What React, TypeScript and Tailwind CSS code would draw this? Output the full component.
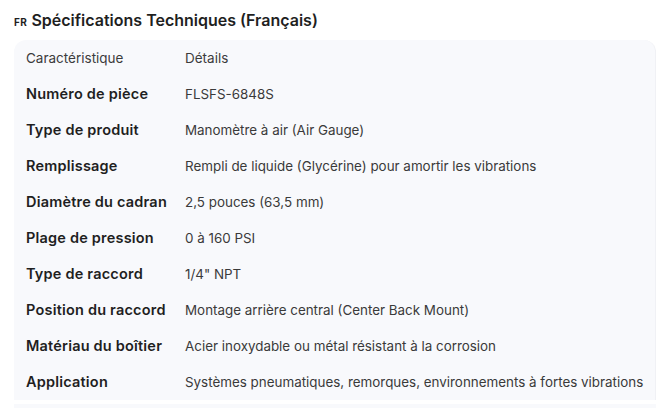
import React from "react";

const rows: [string, string][] = [
  ["Numéro de pièce", "FLSFS-6848S"],
  ["Type de produit", "Manomètre à air (Air Gauge)"],
  ["Remplissage", "Rempli de liquide (Glycérine) pour amortir les vibrations"],
  ["Diamètre du cadran", "2,5 pouces (63,5 mm)"],
  ["Plage de pression", "0 à 160 PSI"],
  ["Type de raccord", "1/4\" NPT"],
  ["Position du raccord", "Montage arrière central (Center Back Mount)"],
  ["Matériau du boîtier", "Acier inoxydable ou métal résistant à la corrosion"],
  ["Application", "Systèmes pneumatiques, remorques, environnements à fortes vibrations"],
];

export default function App() {
  return (
    <div className="w-[670px] h-[408px] overflow-hidden bg-white" style={{ fontFamily: "Inter, 'Noto Sans', sans-serif" }}>
      <div className="pl-[14px] pt-[8px] h-[40px] flex items-start">
        <div className="flex items-baseline gap-[4px]">
          <span className="text-[10px] font-bold text-[#1f1f1f] tracking-[0.5px]">FR</span>
          <span className="text-[16px] font-semibold text-[#1f1f1f]">Spécifications Techniques (Français)</span>
        </div>
      </div>
      <div className="ml-[14px] w-[642px] bg-[#f8f9fc] rounded-t-[12px] border-r border-[#f0f1f5]">
        <div className="grid grid-cols-[171px_1fr] h-[36px] items-center text-[13.5px] text-[#3c3c3c]">
          <div className="pl-[12px]">Caractéristique</div>
          <div>Détails</div>
        </div>
        {rows.map(([k, v]) => (
          <div key={k} className="grid grid-cols-[171px_1fr] h-[36px] items-center">
            <div className="pl-[12px] text-[14.5px] font-semibold tracking-[0.2px] text-[#1f1f1f] whitespace-nowrap">{k}</div>
            <div className="text-[13.4px] text-[#3a3a3a] whitespace-nowrap">{v}</div>
          </div>
        ))}
      </div>
      <div className="ml-[14px] mt-[4px] w-[642px] h-[20px] bg-[#f8f9fc]"></div>
    </div>
  );
}
